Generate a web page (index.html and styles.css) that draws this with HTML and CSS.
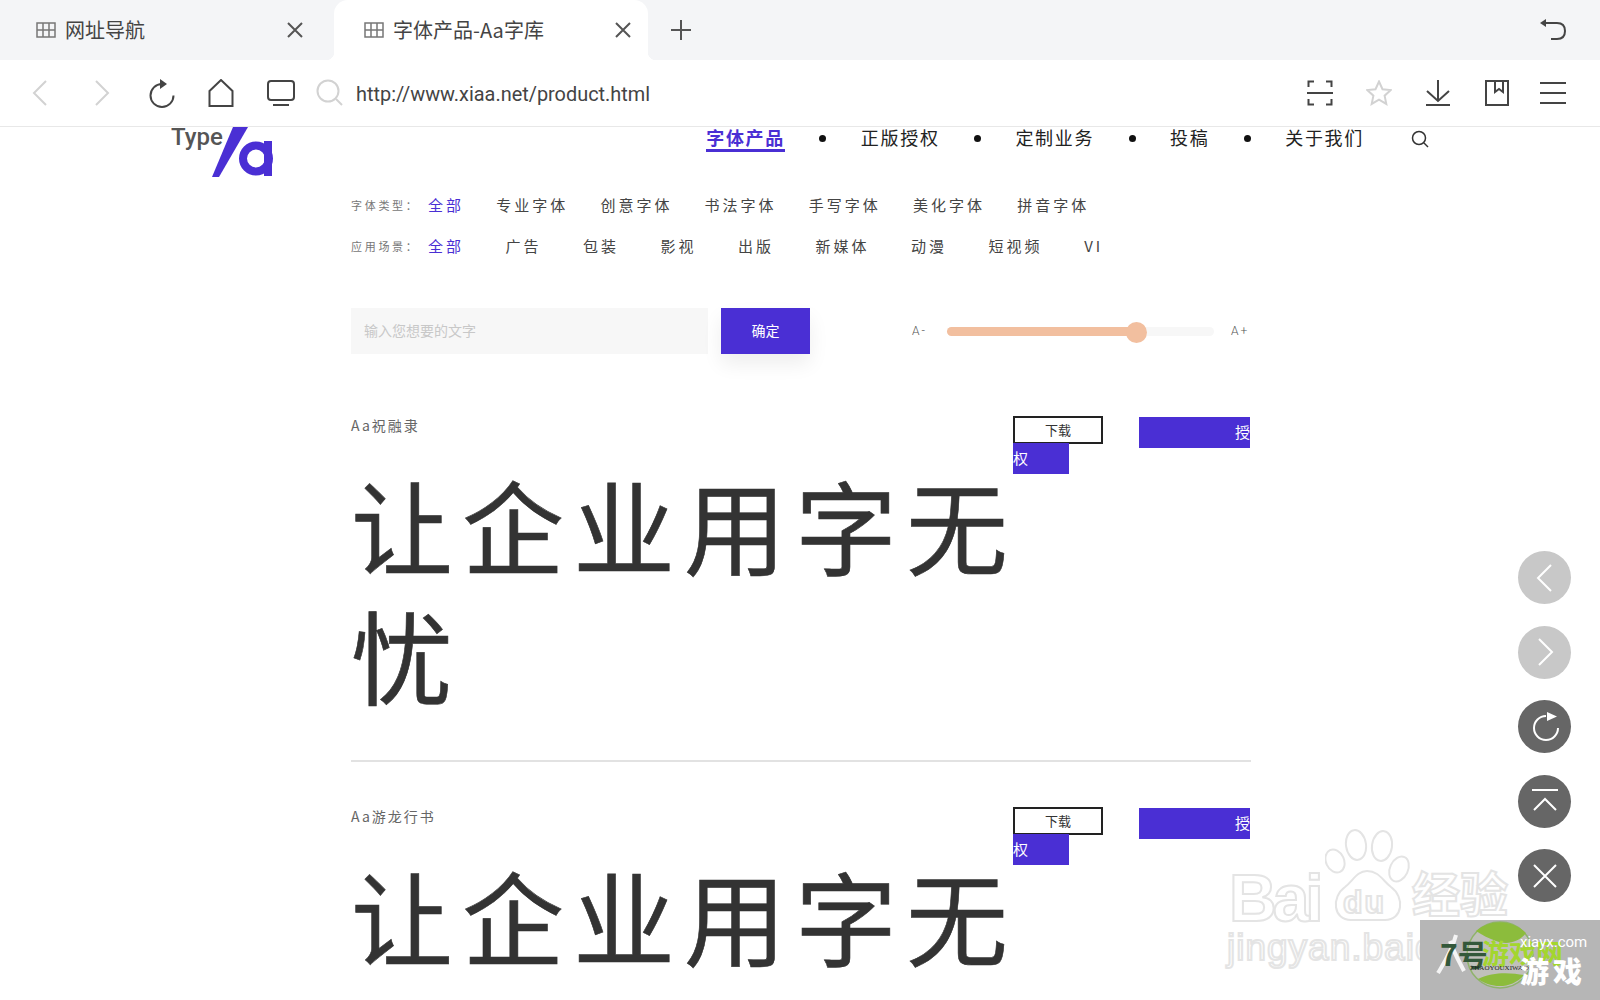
FILE: index.html
```html
<!DOCTYPE html>
<html>
  <head>
    <title>字体产品-Aa字库</title>
    <link rel="stylesheet" href="styles.css">
  </head>
  <body>
    <div class="tabbar">
      <div class="tab">
        <svg class="tab-icon" width="20" height="16" viewBox="0 0 20 16"><path d="M1 1h18v14H1zM1 8h18M7 1v14M13 1v14"/></svg>
        <span class="tab-title">网址导航</span>
        <svg class="tab-close" width="18" height="18" viewBox="0 0 18 18"><path d="M2 2l14 14M16 2L2 16"/></svg>
      </div>
      <div class="tab active">
        <svg class="tab-icon" width="20" height="16" viewBox="0 0 20 16"><path d="M1 1h18v14H1zM1 8h18M7 1v14M13 1v14"/></svg>
        <span class="tab-title">字体产品-Aa字库</span>
        <svg class="tab-close" width="18" height="18" viewBox="0 0 18 18"><path d="M2 2l14 14M16 2L2 16"/></svg>
      </div>
      <svg class="tab-add" width="22" height="22" viewBox="0 0 22 22"><path d="M11 1v20M1 11h20"/></svg>
      <svg class="tab-undo" width="28" height="24" viewBox="0 0 28 24"><path d="M5 5h13c5 0 8 3 8 8s-3 8-8 8h-6"/><path class="fill" d="M1 5l6-4v8z"/></svg>
    </div>

    <div class="toolbar">
      <div class="nav-icons">
        <svg class="off" width="16" height="26" viewBox="0 0 16 26"><path d="M14 1L2 13l12 12"/></svg>
        <svg class="off" width="16" height="26" viewBox="0 0 16 26"><path d="M2 1l12 12L2 25"/></svg>
        <svg width="26" height="30" viewBox="0 0 26 30"><path d="M13 6a11.500 11.500 0 1 0 11.500 11.500"/><path class="fill" d="M11 1l7 5-7 5z"/></svg>
        <svg width="26" height="28" viewBox="0 0 26 28"><path d="M1.500 12L13 1l11.500 11v15h-23z"/></svg>
        <svg width="28" height="28" viewBox="0 0 28 28"><rect x="1" y="2" width="26" height="19" rx="3"/><path d="M6 26h16"/></svg>
      </div>
      <svg class="url-search off" width="28" height="28" viewBox="0 0 28 28"><circle cx="12" cy="12" r="10.500"/><path d="M20 20l6 6"/></svg>
      <span class="url">http://www.xiaa.net/product.html</span>
      <div class="tool-icons">
        <svg width="26" height="26" viewBox="0 0 26 26"><path d="M7 1.500H1.500V7M19 1.500h5.500V7M1.500 19v5.500H7M24.500 19v5.500H19M0 13h26"/></svg>
        <svg class="off" width="26" height="26" viewBox="0 0 26 26"><path d="M13 1.500l3.500 7.700 8.300.9-6.200 5.600 1.700 8.200L13 19.700l-7.300 4.200 1.700-8.200L1.200 10.100l8.300-.9z"/></svg>
        <svg width="26" height="26" viewBox="0 0 26 26"><path d="M13 0v21M2 11l11 10 11-10M1 25h24"/></svg>
        <svg width="26" height="26" viewBox="0 0 26 26"><rect x="2" y="1" width="22" height="24"/><path d="M11 1v11l4-3 4 3V1"/></svg>
        <svg class="menu-icon" width="28" height="24" viewBox="0 0 28 24"><path d="M1 2h26M1 12h26M1 22h26"/></svg>
      </div>
    </div>

    <div class="page">
      <header class="site-header">
        <a class="logo">
          <span class="logo-type">Type</span>
          <svg class="logo-mark" width="62" height="50" viewBox="0 0 62 50"><path class="logo-fill" d="M21 0h15L7 50H0z"/><circle class="logo-ring" cx="44" cy="31.500" r="13"/><rect class="logo-fill" x="52" y="14" width="8" height="35"/></svg>
        </a>
        <nav class="site-nav">
          <a class="current">字体产品</a><i></i>
          <a>正版授权</a><i></i>
          <a>定制业务</a><i></i>
          <a>投稿</a><i></i>
          <a>关于我们</a>
          <svg class="site-search" width="18" height="18" viewBox="0 0 18 18"><circle cx="8" cy="8" r="6.500"/><path d="M13 13l4 4"/></svg>
        </nav>
      </header>

      <div class="content">
        <div class="filter type">
          <span class="filter-label">字体类型：</span>
          <a class="on">全部</a><a>专业字体</a><a>创意字体</a><a>书法字体</a><a>手写字体</a><a>美化字体</a><a>拼音字体</a>
        </div>
        <div class="filter scene">
          <span class="filter-label">应用场景：</span>
          <a class="on">全部</a><a>广告</a><a>包装</a><a>影视</a><a>出版</a><a>新媒体</a><a>动漫</a><a>短视频</a><a>VI</a>
        </div>

        <div class="try-row">
          <div class="try-input">输入您想要的文字</div>
          <button class="try-btn">确定</button>
          <span class="size-label minus">A-</span>
          <div class="slider"><div class="slider-fill"></div><div class="slider-thumb"></div></div>
          <span class="size-label">A+</span>
        </div>

        <section class="font-item">
          <div class="font-head">
            <span class="font-name">Aa祝融隶</span>
            <div class="font-actions"><a class="btn-down">下载</a><a class="btn-auth">授权</a></div>
          </div>
          <p class="font-sample">让企业用字无忧</p>
        </section>

        <section class="font-item">
          <div class="font-head">
            <span class="font-name">Aa游龙行书</span>
            <div class="font-actions"><a class="btn-down">下载</a><a class="btn-auth">授权</a></div>
          </div>
          <p class="font-sample">让企业用字无忧</p>
        </section>
      </div>

      <div class="baidu-mark">
        <svg class="paw" width="86" height="93" viewBox="0 0 86 93"><ellipse cx="10" cy="32" rx="9" ry="12" transform="rotate(-25 10 32)"/><ellipse cx="31" cy="16" rx="10" ry="15" transform="rotate(-8 31 16)"/><ellipse cx="57" cy="17" rx="10" ry="15" transform="rotate(8 57 17)"/><ellipse cx="74" cy="40" rx="9" ry="13" transform="rotate(25 74 40)"/><path d="M42 42c-10 0-14 10-22 16-14 10-12 33 6 33h34c18 0 20-23 6-33-8-6-12-16-24-16z"/></svg>
        <span class="baidu-word">Bai</span>
        <span class="baidu-du">du</span>
        <span class="baidu-cn">经验</span>
        <span class="baidu-url">jingyan.baidu.com</span>
      </div>
    </div>

    <div class="float-btns">
      <a class="light"><svg width="24" height="30" viewBox="0 0 24 30"><path d="M18 2L5 15l13 13"/></svg></a>
      <a class="light"><svg width="24" height="30" viewBox="0 0 24 30"><path d="M6 2l13 13L6 28"/></svg></a>
      <a><svg width="30" height="30" viewBox="0 0 30 30"><path d="M16 4a12 12 0 1 0 12 12"/><path class="fill" d="M17 0l10 4.500L17 9z"/></svg></a>
      <a><svg width="30" height="26" viewBox="0 0 30 26"><path d="M2 2h26M4 22l11-11 11 11"/></svg></a>
      <a><svg width="26" height="26" viewBox="0 0 26 26"><path d="M2 2l22 22M24 2L2 24"/></svg></a>
      <a class="fade"></a>
    </div>

    <div class="site-stamp">
      <svg class="stamp-badge" width="76" height="76" viewBox="0 0 76 76"><circle class="stamp-ring" cx="38" cy="38" r="33"/><path class="stamp-leaf" d="M14 14c14-12 36-12 50 2-8 10-20 12-30 8-8-3-14-6-20-10zM16 62c14 10 34 10 46-4-12-2-30-4-46 4z"/><path class="stamp-brush" d="M-6 18c-4 16-12 28-18 38M-12 24c4 12 10 22 14 30"/></svg>
      <span class="stamp-seven">7号</span>
      <span class="stamp-green">游戏网</span>
      <span class="stamp-url">xiayx.com</span>
      <span class="stamp-pin">ZHAOYOUXIWANG</span>
      <span class="stamp-game">游戏</span>
    </div>
  </body>
</html>
```

FILE: styles.css
```css
*{
  box-sizing: border-box;
}
html,body{
  margin: 0;
  height: 100%;
  overflow: hidden;
  background: #fff;
}
body{
  position: relative;
  font-family: "Noto Sans CJK SC", Roboto, sans-serif;
  color: #333;
}
svg{
  display: block;
  fill: none;
  stroke: #444;
  stroke-width: 2;
  flex: none;
}
svg .fill{
  fill: #444;
  stroke: none;
}
svg.off{
  stroke: #d2d2d2;
}
a{
  cursor: pointer;
}

/* tabs */
.tabbar{
  height: 60px;
  background: #f4f5f7;
  display: flex;
  align-items: center;
}
.tab{
  width: 334px;
  height: 60px;
  padding: 0 30px 0 36px;
  display: flex;
  align-items: center;
  font-size: 20px;
  line-height: 58px;
  color: #444;
}
.tab.active{
  position: relative;
  width: 314px;
  padding: 0 16px 0 30px;
  background: #fff;
  border-radius: 14px 14px 0 0;
}
.tab.active::before,
.tab.active::after{
  content: "";
  position: absolute;
  bottom: 0;
  width: 8px;
  height: 8px;
}
.tab.active::before{
  left: -8px;
  background: radial-gradient(circle at 0 0, #f4f5f7 8px, #fff 8.500px);
}
.tab.active::after{
  right: -8px;
  background: radial-gradient(circle at 100% 0, #f4f5f7 8px, #fff 8.500px);
}
.tab-icon{
  stroke: #777;
  stroke-width: 1.500;
}
.tab-title{
  margin-left: 9px;
  flex: 1;
}
.tab-close{
  stroke: #555;
}
.tab-add{
  margin-left: 22px;
  stroke: #555;
}
.tab-undo{
  margin-left: auto;
  margin-right: 33px;
}

/* toolbar */
.toolbar{
  height: 67px;
  border-bottom: 1px solid #e8e8e8;
  display: flex;
  align-items: center;
  padding: 0 33px 0 32px;
}
.nav-icons{
  display: flex;
  align-items: center;
  gap: 33px;
  width: 284px;
}
.nav-icons svg:nth-child(2){
  margin-left: 13px;
}
.nav-icons svg:nth-child(3){
  margin-left: 6px;
}
.url-search{
  margin-left: 0;
}
.url{
  font-family: Roboto, sans-serif;
  font-size: 19.900px;
  color: #444;
  margin: 2px 0 0 12px;
}
.tool-icons{
  margin-left: auto;
  display: flex;
  align-items: center;
  gap: 33px;
}
.menu-icon{
  margin-left: -4px;
}

/* page */
.page{
  position: relative;
  height: 873px;
  overflow: hidden;
}
.site-header{
  height: 57px;
  display: flex;
  padding: 0 171px 0 171px;
}
.logo{
  position: relative;
  width: 103px;
  height: 50px;
  overflow: hidden;
}
.logo-type{
  display: block;
  font-family: Roboto, sans-serif;
  font-weight: 500;
  font-size: 24px;
  line-height: 20px;
  color: #555;
}
.logo-mark{
  position: absolute;
  left: 41px;
  top: 0;
}
.logo-fill{
  fill: #4a2fd4;
  stroke: none;
}
.logo-ring{
  stroke: #4a2fd4;
  stroke-width: 8;
}
.site-nav{
  margin-left: auto;
  display: flex;
  align-items: flex-start;
  font-size: 18px;
  letter-spacing: 1.700px;
  line-height: 21px;
  color: #222;
}
.site-nav a.current{
  color: #4a2fd4;
  font-weight: 700;
  border-bottom: 3px solid #4a2fd4;
  padding-bottom: 1px;
}
.site-nav i{
  width: 7px;
  height: 7px;
  margin: 8px 34.400px 0;
  background: #111;
  border-radius: 50%;
}
.site-search{
  margin: 3px 0 0 47px;
  stroke: #333;
  stroke-width: 1.500;
}

.content{
  width: 900px;
  margin-left: 351px;
}
.filter{
  height: 41px;
  display: flex;
  align-items: center;
  font-size: 15px;
  letter-spacing: 3px;
  color: #444;
}
.filter a{
  margin-right: 32.200px;
}
.filter.scene a{
  margin-right: 41.500px;
}
.filter a.on{
  color: #4a2fd4;
}
.filter-label{
  width: 77px;
  font-size: 11px;
  letter-spacing: 2.700px;
  color: #777;
}

.try-row{
  margin-top: 42px;
  height: 46px;
  display: flex;
  align-items: center;
}
.try-input{
  width: 357px;
  height: 46px;
  padding-left: 13px;
  background: #f7f7f7;
  color: #c8c8c8;
  font-size: 14px;
  line-height: 44px;
}
.try-btn{
  width: 89px;
  height: 46px;
  margin-left: 13px;
  padding: 0 0 2px;
  border: 0;
  background: #4a2fd4;
  color: #fff;
  font-family: inherit;
  font-size: 14px;
  box-shadow: 0 10px 20px rgba(0,0,0,.07);
}
.size-label{
  font-family: Roboto, sans-serif;
  font-size: 12px;
  font-weight: 300;
  letter-spacing: 2px;
  color: #555;
}
.size-label.minus{
  margin-left: 102px;
}
.slider{
  position: relative;
  width: 267px;
  height: 9px;
  margin: 0 17px 0 20px;
  background: #f7f7f7;
  border-radius: 5px;
}
.slider-fill{
  width: 189px;
  height: 9px;
  background: #f2bf9f;
  border-radius: 5px;
}
.slider-thumb{
  position: absolute;
  left: 179px;
  top: -5px;
  width: 21px;
  height: 21px;
  background: #f2bf9f;
  border-radius: 50%;
}

.font-item{
  margin-top: 62px;
  height: 346px;
  border-bottom: 2px solid #e2e2e2;
}
.font-item + .font-item{
  margin-top: 45px;
}
.font-head{
  display: flex;
  justify-content: space-between;
  height: 43px;
}
.font-name{
  font-size: 14px;
  letter-spacing: 2px;
  line-height: 18px;
  color: #666;
}
.font-actions{
  width: 238px;
  padding-top: 2px;
  font-size: 15px;
  line-height: 26px;
}
.btn-down{
  display: inline-block;
  width: 90px;
  height: 28px;
  margin: -2px 36px -2px 0;
  border: 2px solid #222;
  background: #fff;
  color: #333;
  text-align: center;
  font-size: 13px;
  line-height: 24px;
  vertical-align: top;
}
.btn-auth{
  padding: 3.500px 41px 6.500px 96px;
  background: #4a2fd4;
  color: #fff;
}
.font-sample{
  width: 680px;
  margin: 0;
  font-size: 102px;
  letter-spacing: 9px;
  line-height: 130px;
  color: #333;
  -webkit-text-stroke: .6px #333;
}

/* baidu watermark */
.baidu-mark{
  position: absolute;
  left: 1225px;
  top: 700px;
  width: 375px;
  height: 170px;
  color: #fff;
  -webkit-text-stroke: 2px #e4e4e4;
}
.baidu-mark span{
  position: absolute;
  font-family: "Liberation Sans", sans-serif;
  line-height: 1;
}
.paw{
  position: absolute;
  left: 100px;
  top: 2px;
  stroke: #e4e4e4;
}
.baidu-word{
  left: 4px;
  top: 38px;
  font-size: 66px;
  font-weight: 700;
  letter-spacing: -4px;
}
.baidu-du{
  left: 118px;
  top: 59px;
  font-size: 32px;
  font-weight: 700;
  letter-spacing: 2px;
}
.baidu-mark .baidu-cn{
  left: 187px;
  top: 40px;
  font-family: "Noto Sans CJK SC", sans-serif;
  font-size: 48px;
  font-weight: 700;
}
.baidu-url{
  left: 2px;
  top: 102px;
  font-size: 37px;
  letter-spacing: 1px;
}

/* floating buttons */
.float-btns{
  position: absolute;
  right: 29px;
  top: 551px;
  display: flex;
  flex-direction: column;
  gap: 21.500px;
}
.float-btns a{
  width: 53px;
  height: 53px;
  display: flex;
  align-items: center;
  justify-content: center;
  border-radius: 50%;
  background: #666;
}
.float-btns a.light{
  background: #c8c8c8;
}
.float-btns a.fade{
  background: #eee;
}
.float-btns svg{
  stroke: #fff;
  overflow: visible;
}
.float-btns svg .fill{
  fill: #fff;
}

/* site stamp */
.site-stamp{
  position: absolute;
  left: 1420px;
  top: 920px;
  width: 180px;
  height: 80px;
  background: #b6b6b6;
  overflow: hidden;
}
.site-stamp span{
  position: absolute;
  line-height: 1;
  white-space: nowrap;
}
.stamp-badge{
  position: absolute;
  left: 42px;
  top: -3px;
  overflow: visible;
}
.stamp-ring{
  stroke: #8fb36a;
  stroke-width: 1.500;
  fill: #c0c0bb;
}
.stamp-leaf{
  fill: #8cbc3c;
  stroke: none;
}
.stamp-brush{
  stroke: #f4f4f4;
  stroke-width: 4;
}
.stamp-seven{
  left: 20px;
  top: 18px;
  font-size: 30px;
  font-weight: 700;
  color: #33583a;
}
.stamp-green{
  left: 62px;
  top: 19px;
  font-size: 27px;
  font-weight: 700;
  color: #a3d62e;
}
.stamp-url{
  left: 100px;
  top: 15px;
  font-family: Roboto, sans-serif;
  font-size: 15px;
  color: #fff;
}
.stamp-pin{
  left: 50px;
  top: 45px;
  font-family: "Liberation Serif", serif;
  font-size: 7px;
  color: #222;
}
.stamp-game{
  left: 100px;
  top: 36px;
  font-size: 29px;
  font-weight: 900;
  letter-spacing: 4px;
  color: #fff;
}
```
